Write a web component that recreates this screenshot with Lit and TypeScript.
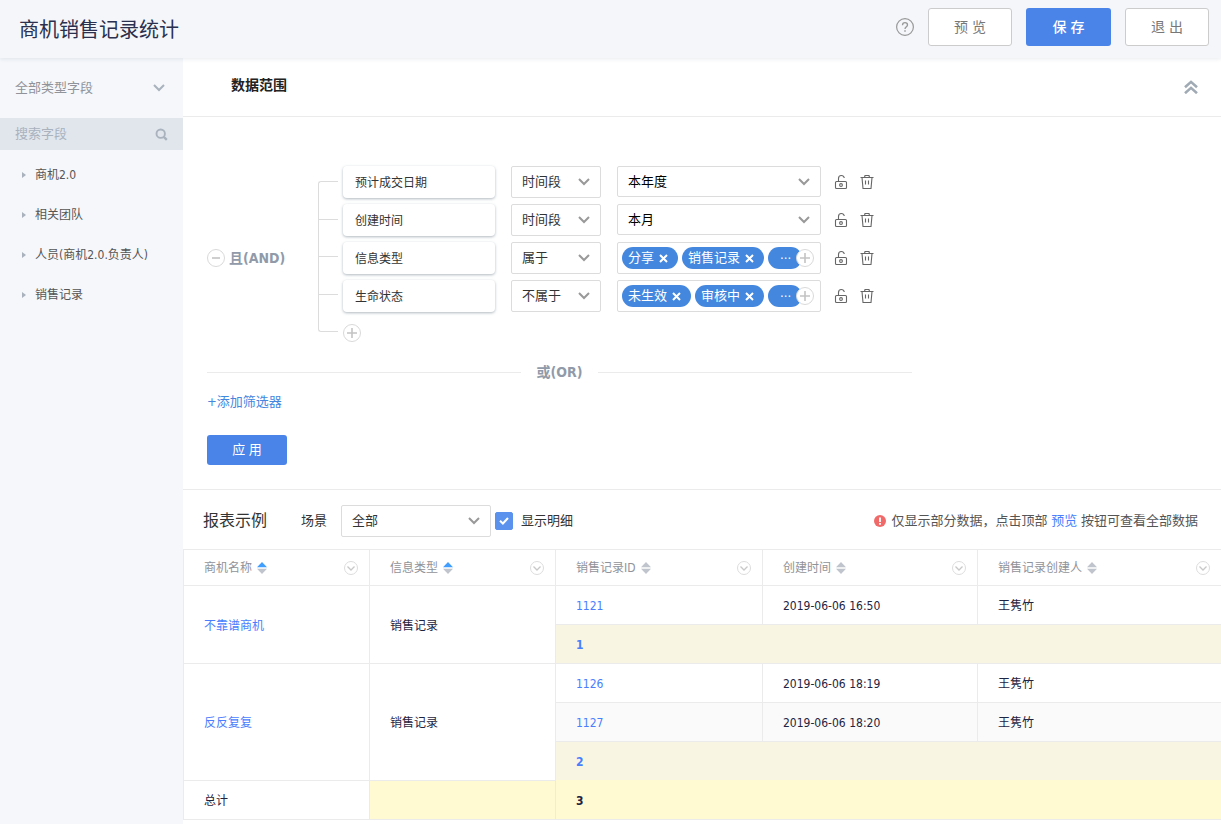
import { LitElement, html, css, nothing } from "lit";
import { customElement, property, state } from "lit/decorators.js";
import { classMap } from "lit/directives/class-map.js";

const chevron = html`<svg class="chev" width="12" height="8" viewBox="0 0 12 8" aria-hidden="true">
  <path d="M1 1l5 5 5-5" fill="none" stroke="currentColor" stroke-width="2" />
</svg>`;

const plus = html`<svg width="18" height="18" viewBox="0 0 18 18" aria-hidden="true">
  <circle cx="9" cy="9" r="8.5" fill="#fff" stroke="#d9d9d9" />
  <path d="M9 4v10M4 9h10" stroke="#c4c4c4" stroke-width="1.6" />
</svg>`;

const base = css`
  * {
    box-sizing: border-box;
  }
  button,
  input,
  select {
    font: inherit;
    color: inherit;
    margin: 0;
  }
  button {
    padding: 0;
    border: 0;
    background: none;
    cursor: pointer;
  }
  svg {
    display: block;
    flex: none;
  }
  a {
    color: #4a7eff;
    text-decoration: none;
  }
`;

@customElement("pick-list")
class PickList extends LitElement {
  @property({ type: Array }) options: string[] = [];
  @property() label = "";

  static styles = [
    base,
    css`
      :host {
        display: block;
        height: 32px;
      }
      .pick {
        display: grid;
        grid-template-columns: minmax(0, 1fr);
        height: 100%;
        align-items: center;
      }
      select {
        grid-area: 1 / 1;
        width: 100%;
        height: 100%;
        padding: 0 28px 0 10px;
        border: 1px solid #dcdcdc;
        border-radius: 2px;
        background: #fff;
        appearance: none;
      }
      .chev {
        grid-area: 1 / 1;
        justify-self: end;
        margin-right: 11px;
        color: #999;
        pointer-events: none;
      }
      :host([plain]) select {
        padding-left: 15px;
        border: 0;
        background: transparent;
      }
      :host([plain]) .chev {
        margin-right: 18px;
        color: #a9b2bd;
      }
    `,
  ];

  render() {
    return html`<div class="pick">
      <select aria-label=${this.label}>
        ${this.options.map((o) => html`<option>${o}</option>`)}
      </select>
      ${chevron}
    </div>`;
  }
}

interface Condition {
  field: string;
  op: string;
  value?: string;
  tags?: string[];
}

@customElement("filter-row")
class FilterRow extends LitElement {
  @property({ attribute: false }) condition!: Condition;

  static styles = [
    base,
    css`
      :host {
        display: flex;
        align-items: flex-start;
        height: 32px;
      }
      .field {
        width: 152px;
        height: 32px;
        padding-left: 12px;
        border-radius: 4px;
        background: #fff;
        box-shadow: 0 1px 3px rgba(60, 80, 100, 0.4);
        font-size: 12px;
        line-height: 34px;
      }
      .op {
        width: 90px;
        margin: 0 16px;
      }
      .value {
        width: 204px;
        height: 31px;
        color: #000;
      }
      .tags {
        display: flex;
        align-items: center;
        width: 204px;
        height: 32px;
        padding-left: 4px;
        border: 1px solid #dcdcdc;
        border-radius: 2px;
      }
      .tag {
        display: flex;
        align-items: center;
        gap: 5px;
        height: 22px;
        margin-right: 4px;
        padding: 0 10px 0 6px;
        border-radius: 11px;
        background: #4387df;
        color: #fff;
        line-height: 22px;
      }
      .more {
        margin-right: -6px;
        padding: 2px 11px 0 12px;
      }
      .tools {
        display: flex;
        gap: 12px;
        align-items: center;
        height: 32px;
        margin-left: 13px;
        color: #666;
      }
    `,
  ];

  render() {
    const c = this.condition;
    return html`
      <div class="field">${c.field}</div>
      <pick-list class="op" label="条件" .options=${[c.op]}></pick-list>
      ${c.tags
        ? html`<div class="tags">
            ${c.tags.map(
              (t) => html`<span class="tag"
                >${t}
                <button aria-label="移除">
                  <svg width="9" height="9" viewBox="0 0 9 9">
                    <path d="M1 1l7 7M8 1l-7 7" stroke="#fff" stroke-width="2" />
                  </svg></button
              ></span>`
            )}
            <span class="tag more">···</span>
            <button aria-label="添加">${plus}</button>
          </div>`
        : html`<pick-list class="value" label="取值" .options=${[c.value]}></pick-list>`}
      <div class="tools">
        <button aria-label="锁定">
          <svg width="14" height="16" viewBox="0 0 14 16" fill="none" stroke="currentColor" stroke-width="1.1">
            <rect x="1.5" y="7.5" width="11" height="7" rx="1" />
            <path d="M4.5 7.500V4.500C4.500 2.800 5.500 1.500 7.300 1.500C9 1.500 10 2.500 10.300 4" />
            <circle cx="7" cy="11" r="1.400" />
          </svg>
        </button>
        <button aria-label="删除">
          <svg width="14" height="16" viewBox="0 0 14 16" fill="none" stroke="currentColor" stroke-width="1.1">
            <path d="M0.500 3.500h13M4.500 3.500L5 1.500h4l.5 2M2 3.500L3 14.500h8L12 3.500M5.500 6.500v4M8.500 6.500v4" />
          </svg>
        </button>
      </div>
    `;
  }
}

interface Column {
  name: string;
  cls: string;
  sorted?: boolean;
}

const columns: Column[] = [
  { name: "商机名称", cls: "c1", sorted: true },
  { name: "信息类型", cls: "c2", sorted: true },
  { name: "销售记录ID", cls: "c3" },
  { name: "创建时间", cls: "c4" },
  { name: "销售记录创建人", cls: "c5" },
];

const groups = [
  { name: "不靠谱商机", type: "销售记录", rows: [["1121", "2019-06-06 16:50", "王隽竹"]] },
  {
    name: "反反复复",
    type: "销售记录",
    rows: [
      ["1126", "2019-06-06 18:19", "王隽竹"],
      ["1127", "2019-06-06 18:20", "王隽竹"],
    ],
  },
];

@customElement("report-table")
class ReportTable extends LitElement {
  static styles = [
    base,
    css`
      :host {
        display: block;
        font-size: 12px;
      }
      table {
        width: 100%;
        border-collapse: separate;
        border-spacing: 0;
        table-layout: fixed;
        border-top: 1px solid #ebebeb;
        border-left: 1px solid #ebebeb;
        color: #1f2440;
      }
      th,
      td {
        height: 39px;
        padding: 2px 0 0 20px;
        border-right: 1px solid #ebebeb;
        border-bottom: 1px solid #ebebeb;
        text-align: left;
        line-height: 18px;
      }
      th {
        height: 36px;
        padding-top: 0;
        color: #909399;
        font-weight: 400;
      }
      th:last-child,
      td.last {
        border-right: 0;
      }
      .c1,
      .c2 {
        width: 186px;
      }
      .c3 {
        width: 207px;
      }
      .c4 {
        width: 215px;
      }
      .head {
        display: flex;
        align-items: center;
        gap: 5px;
        padding-right: 11px;
      }
      .menu {
        margin-left: auto;
      }
      .striped {
        background: #fafafa;
      }
      .sub {
        background: #f8f5e3;
        color: #4a7eff;
        font-weight: 700;
      }
      .sub.end {
        border-bottom-color: #fffad2;
      }
      .sum {
        background: #fffad2;
        font-weight: 700;
      }
    `,
  ];

  render() {
    return html`<table>
      <thead>
        <tr>
          ${columns.map(
            (c) => html`<th class=${c.cls}>
              <div class="head">
                <span>${c.name}</span>
                <button aria-label="排序">
                  <svg width="10" height="12" viewBox="0 0 10 12">
                    <path d="M5 0l5 5.200H0z" fill=${c.sorted ? "#409eff" : "#c0c4cc"} />
                    <path d="M5 12l5-5.200H0z" fill="#c0c4cc" />
                  </svg>
                </button>
                <button class="menu" aria-label="列菜单">
                  <svg width="14" height="14" viewBox="0 0 14 14" fill="none">
                    <circle cx="7" cy="7" r="6.500" stroke="#dcdcdc" />
                    <path d="M3.500 5.500L7 9l3.500-3.500" stroke="#c8c8c8" stroke-width="1.300" />
                  </svg>
                </button>
              </div>
            </th>`
          )}
        </tr>
      </thead>
      <tbody>
        ${groups.map(
          (g, gi) => html`
            ${g.rows.map(
              (r, i) => html`<tr>
                ${i === 0
                  ? html`<td rowspan=${g.rows.length + 1}><a href="#">${g.name}</a></td>
                      <td rowspan=${g.rows.length + 1}>${g.type}</td>`
                  : nothing}
                <td class=${classMap({ striped: i % 2 === 1 })}><a href="#">${r[0]}</a></td>
                <td class=${classMap({ striped: i % 2 === 1 })}>${r[1]}</td>
                <td class=${classMap({ striped: i % 2 === 1, last: true })}>${r[2]}</td>
              </tr>`
            )}
            <tr>
              <td colspan="3" class=${classMap({ sub: true, last: true, end: gi === groups.length - 1 })}>
                ${g.rows.length}
              </td>
            </tr>
          `
        )}
        <tr>
          <td>总计</td>
          <td class="sum"></td>
          <td colspan="3" class="sum last">3</td>
        </tr>
      </tbody>
    </table>`;
  }
}

@customElement("app-root")
class AppRoot extends LitElement {
  @state() private detail = true;

  private conditions: Condition[] = [
    { field: "预计成交日期", op: "时间段", value: "本年度" },
    { field: "创建时间", op: "时间段", value: "本月" },
    { field: "信息类型", op: "属于", tags: ["分享", "销售记录"] },
    { field: "生命状态", op: "不属于", tags: ["未生效", "审核中"] },
  ];

  static styles = [
    base,
    css`
      :host {
        display: flex;
        flex-direction: column;
        min-height: 100vh;
        background: #fff;
        color: #333;
        font-family: "DejaVu Sans Condensed", "Noto Sans CJK SC", sans-serif;
        font-size: 13px;
        line-height: 20px;
      }
      .top {
        display: flex;
        align-items: center;
        gap: 14px;
        height: 58px;
        padding: 0 12px 4px 19px;
        background: #f4f6fa;
        box-shadow: 0 1px 4px rgba(40, 60, 90, 0.1);
        z-index: 1;
      }
      h1 {
        flex: 1;
        margin: 0;
        padding-top: 5px;
        color: #2a304d;
        font-size: 20px;
        font-weight: 400;
        line-height: 28px;
      }
      .btn {
        width: 84px;
        height: 38px;
        border: 1px solid #ccc;
        border-radius: 3px;
        background: #fff;
        color: #777;
        font-size: 14px;
      }
      .primary {
        width: 85px;
        border: 0;
        background: #4a84e8;
        color: #fff;
        font-weight: 500;
      }
      .body {
        display: flex;
        flex: 1;
      }
      .side {
        flex: 0 0 183px;
        min-width: 0;
        background: #f5f7fa;
      }
      .kind {
        height: 60px;
        color: #909399;
      }
      .search {
        display: flex;
        align-items: center;
        height: 32px;
        padding: 0 15px;
        background: #e1e6ed;
        color: #a9b2bd;
      }
      .search input {
        flex: 1;
        min-width: 0;
        padding: 0;
        border: 0;
        outline: 0;
        background: none;
      }
      .search input::placeholder {
        color: #a9b2bd;
      }
      .tree {
        margin: 0;
        padding: 5px 0 0;
        list-style: none;
        font-size: 12px;
      }
      .tree button {
        display: flex;
        align-items: center;
        gap: 9px;
        width: 100%;
        height: 40px;
        padding-left: 22px;
        color: #555;
      }
      main {
        flex: 1;
        min-width: 0;
      }
      .range {
        display: flex;
        align-items: center;
        justify-content: space-between;
        height: 59px;
        padding: 0 23px 4px 48px;
        border-bottom: 1px solid #ebebeb;
      }
      .fold {
        padding-top: 4px;
      }
      h2 {
        margin: 0;
        color: #222;
        font-size: 14px;
      }
      .filters {
        padding: 49px 24px 24px;
        border-bottom: 1px solid #ebebeb;
      }
      .group {
        display: flex;
      }
      .joint {
        display: flex;
        align-items: center;
        gap: 4px;
        width: 111px;
        padding-top: 8px;
      }
      .logic {
        color: #909aa9;
        font-size: 14px;
        font-weight: 700;
      }
      .bracket {
        display: flex;
        flex-direction: column;
        justify-content: space-evenly;
        width: 20px;
        margin: 15px 5px 10px 0;
        border: 1px solid #dcdcdc;
        border-right: 0;
        border-radius: 3px 0 0 3px;
      }
      .bracket span {
        height: 1px;
        background: #dcdcdc;
      }
      .rows {
        display: flex;
        flex-direction: column;
        gap: 6px;
      }
      .add-row {
        align-self: flex-start;
        margin-top: 6px;
      }
      .or {
        display: flex;
        align-items: center;
        gap: 16px;
        max-width: 705px;
        margin-top: 20px;
      }
      .or::before,
      .or::after {
        content: "";
        flex: 1;
        height: 1px;
        background: #ebebeb;
      }
      .more {
        display: block;
        width: max-content;
        margin: 10px 0 23px;
        color: #4387df;
      }
      .apply {
        width: 80px;
        height: 30px;
        border-radius: 3px;
        background: #4a84e8;
        color: #fff;
      }
      .report {
        display: flex;
        align-items: center;
        padding: 15px 23px 12px 20px;
      }
      .report h2 {
        margin-right: 34px;
        color: #333;
        font-size: 16px;
        font-weight: 400;
      }
      .scene {
        width: 150px;
        margin: 0 4px 0 14px;
      }
      .check {
        display: flex;
        align-items: center;
        gap: 8px;
      }
      .box {
        display: grid;
        place-items: center;
        width: 18px;
        height: 18px;
      }
      .box input,
      .box svg {
        grid-area: 1 / 1;
      }
      .box svg {
        pointer-events: none;
      }
      .box input {
        width: 18px;
        height: 18px;
        border: 1px solid #5a92ee;
        border-radius: 2px;
        appearance: none;
      }
      .box input:checked {
        background: #5a92ee;
      }
      .notice {
        display: flex;
        align-items: center;
        gap: 6px;
        margin: 0 0 0 auto;
        color: #555;
      }
    `,
  ];

  render() {
    return html`
      <header class="top">
        <h1>商机销售记录统计</h1>
        <button aria-label="帮助">
          <svg width="18" height="18" viewBox="0 0 18 18" fill="none" stroke="#999">
            <circle cx="9" cy="9" r="8.400" stroke-width="1.200" />
            <path d="M6.500 7.200C6.500 5.500 7.600 4.700 9 4.700s2.500.9 2.500 2.200C11.500 8.700 9 8.700 9 11" stroke-width="1.300" />
            <path d="M9 12.200v1.500" stroke-width="1.500" />
          </svg>
        </button>
        <button class="btn">预 览</button>
        <button class="btn primary">保 存</button>
        <button class="btn">退 出</button>
      </header>
      <div class="body">
        <aside class="side">
          <pick-list plain class="kind" label="字段类型" .options=${["全部类型字段"]}></pick-list>
          <label class="search">
            <input type="text" placeholder="搜索字段" aria-label="搜索字段" />
            <svg width="13" height="13" viewBox="0 0 13 13" fill="none" stroke="currentColor">
              <circle cx="5.700" cy="5.700" r="4.200" stroke-width="1.900" />
              <path d="M8.800 8.800l3 3" stroke-width="2.400" />
            </svg>
          </label>
          <ul class="tree">
            ${["商机2.0", "相关团队", "人员(商机2.0.负责人)", "销售记录"].map(
              (t) => html`<li>
                <button>
                  <svg width="4" height="6" viewBox="0 0 4 6"><path d="M0 0l4 3-4 3z" fill="#a9b2bd" /></svg>
                  ${t}
                </button>
              </li>`
            )}
          </ul>
        </aside>
        <main>
          <div class="range">
            <h2>数据范围</h2>
            <button class="fold" aria-label="收起">
              <svg width="14" height="14" viewBox="0 0 14 14" fill="none" stroke="#a0aab4" stroke-width="2.600">
                <path d="M1 7.200L7 1.900l6 5.300M1 13.200L7 7.900l6 5.300" />
              </svg>
            </button>
          </div>
          <section class="filters">
            <div class="group">
              <div class="joint">
                <button aria-label="移除分组">
                  <svg width="18" height="18" viewBox="0 0 18 18">
                    <circle cx="9" cy="9" r="8.500" fill="#fff" stroke="#d9d9d9" />
                    <path d="M5 9h8" stroke="#c4c4c4" stroke-width="1.600" />
                  </svg>
                </button>
                <span class="logic">且(AND)</span>
              </div>
              <div class="bracket"><span></span><span></span><span></span></div>
              <div class="rows">
                ${this.conditions.map((c) => html`<filter-row .condition=${c}></filter-row>`)}
                <button class="add-row" aria-label="添加条件">${plus}</button>
              </div>
            </div>
            <div class="or"><span class="logic">或(OR)</span></div>
            <a class="more" href="#">+添加筛选器</a>
            <button class="apply">应 用</button>
          </section>
          <div class="report">
            <h2>报表示例</h2>
            <span>场景</span>
            <pick-list class="scene" label="场景" .options=${["全部"]}></pick-list>
            <label class="check">
              <span class="box">
                <input
                  type="checkbox"
                  .checked=${this.detail}
                  @change=${(e: Event) => (this.detail = (e.target as HTMLInputElement).checked)}
                />
                <svg width="10" height="8" viewBox="0 0 10 8">
                  <path d="M1 3.800l2.900 2.700L9 1" fill="none" stroke="#fff" stroke-width="2" />
                </svg>
              </span>
              显示明细
            </label>
            <p class="notice">
              <svg width="12" height="12" viewBox="0 0 12 12">
                <circle cx="6" cy="6" r="6" fill="#f06a6a" />
                <path d="M6 2.500v4.500M6 8v1.700" stroke="#fff" stroke-width="1.800" />
              </svg>
              <span>仅显示部分数据，点击顶部 <a href="#">预览</a> 按钮可查看全部数据</span>
            </p>
          </div>
          <report-table></report-table>
        </main>
      </div>
    `;
  }
}
